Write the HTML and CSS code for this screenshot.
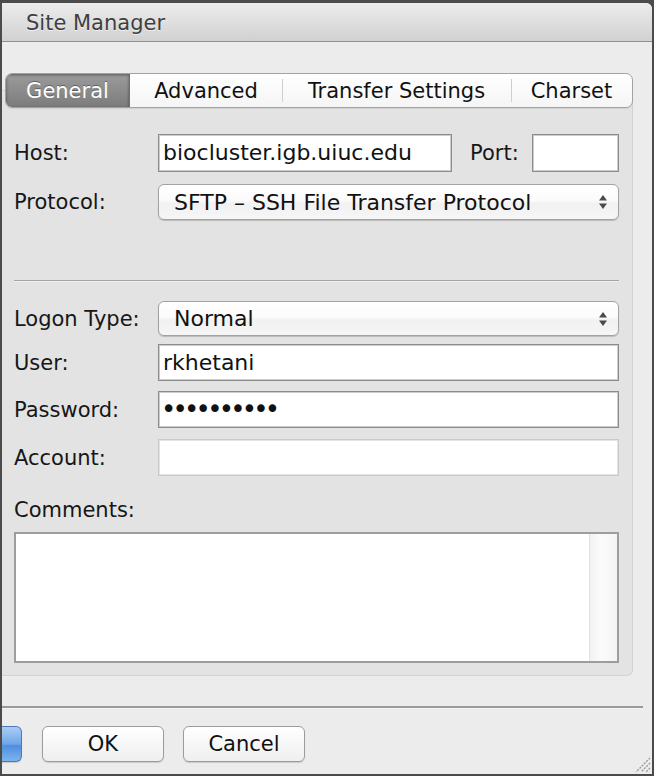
FILE: index.html
```html
<!DOCTYPE html>
<html>
<head>
<meta charset="utf-8">
<link rel="stylesheet" href="styles.css">
</head>
<body>
<div class="window">
  <div class="titlebar">Site Manager</div>
  <div class="content">
    <div class="tabs">
      <div class="tab tab-general selected">General</div>
      <div class="tab tab-advanced">Advanced</div>
      <div class="tab tab-transfer sep">Transfer Settings</div>
      <div class="tab tab-charset sep">Charset</div>
    </div>
    <div class="panel">
      <div class="row row-host">
        <div class="label">Host:</div>
        <div class="field host-field">
          <div class="input host-input">biocluster.igb.uiuc.edu</div>
          <div class="label port-label">Port:</div>
          <div class="input port-input"></div>
        </div>
      </div>
      <div class="row row-protocol">
        <div class="label">Protocol:</div>
        <div class="field">
          <div class="select">
            <span>SFTP – SSH File Transfer Protocol</span>
            <svg class="arrows" width="10" height="16" viewBox="0 0 10 16"><path d="M5 1 L9 6.5 L1 6.5 Z M1 9.5 L9 9.5 L5 15 Z" fill="#4a4a4a"/></svg>
          </div>
        </div>
      </div>
      <div class="divider"></div>
      <div class="row row-logon">
        <div class="label">Logon Type:</div>
        <div class="field">
          <div class="select select-logon">
            <span>Normal</span>
            <svg class="arrows" width="10" height="16" viewBox="0 0 10 16"><path d="M5 1 L9 6.5 L1 6.5 Z M1 9.5 L9 9.5 L5 15 Z" fill="#4a4a4a"/></svg>
          </div>
        </div>
      </div>
      <div class="row row-user">
        <div class="label">User:</div>
        <div class="field"><div class="input">rkhetani</div></div>
      </div>
      <div class="row row-pass">
        <div class="label">Password:</div>
        <div class="field"><div class="input password">••••••••••</div></div>
      </div>
      <div class="row row-account">
        <div class="label">Account:</div>
        <div class="field"><div class="input disabled"></div></div>
      </div>
      <div class="comments-label">Comments:</div>
      <div class="textarea">
        <div class="text-body"></div>
        <div class="scrolltrack"></div>
      </div>
    </div>
    <div class="footer-line"></div>
    <div class="buttons">
      <div class="btn btn-default"></div>
      <div class="btn">OK</div>
      <div class="btn">Cancel</div>
    </div>
  </div>
  <svg class="grip" width="20" height="20" viewBox="0 0 20 20">
    <path d="M19 5 L5 19 M19 10 L10 19 M19 15 L15 19" stroke="#9a9a9a" stroke-width="1.3" stroke-dasharray="2 1.2"/>
  </svg>
</div>
</body>
</html>
```

FILE: styles.css
```css
html, body {
  margin: 0;
  padding: 0;
}
body {
  width: 654px;
  height: 776px;
  overflow: hidden;
  background: #4b4b4b;
  font-family: "DejaVu Sans", "Liberation Sans", sans-serif;
  color: #1c1c1c;
}
.window {
  margin: 3px 2px 0 2px;
  height: 771px;
  background: #ececec;
  border-radius: 0 6px 0 0;
  position: relative;
  overflow: hidden;
  display: flex;
  flex-direction: column;
}
.titlebar {
  height: 38px;
  line-height: 40px;
  border-bottom: 1px solid #8f8f8f;
  background: linear-gradient(#ececec, #d1d1d1);
  font-size: 21px;
  color: #3f3f3f;
  padding-left: 24px;
  text-shadow: 0 1px 0 rgba(255,255,255,0.6);
}
.content {
  display: flex;
  flex-direction: column;
  padding-top: 31px;
}
.tabs {
  display: flex;
  margin-left: 3px;
  width: 628px;
  height: 35px;
  box-sizing: border-box;
  border: 1px solid #a3a3a3;
  border-radius: 7px;
  background: linear-gradient(#ffffff, #f5f5f5);
  position: relative;
  z-index: 1;
  overflow: hidden;
  box-shadow: 0 1px 1px rgba(0,0,0,0.08);
}
.tab {
  display: flex;
  align-items: center;
  justify-content: center;
  font-size: 21px;
  color: #111111;
  position: relative;
}
.tab.sep::before {
  content: "";
  position: absolute;
  left: 0;
  top: 5px;
  bottom: 5px;
  width: 1px;
  background: #cfcfcf;
}
.tab-general { width: 123px; }
.tab-advanced { width: 152px; }
.tab-transfer { width: 229px; }
.tab-charset { flex: 1; }
.tab.selected {
  background: linear-gradient(#9b9b9b, #7c7c7c);
  box-shadow: inset 0 1px 3px rgba(0,0,0,0.45);
  color: #ffffff;
  text-shadow: 0 -1px 0 rgba(0,0,0,0.35);
  border-right: 1px solid #6f6f6f;
}
.panel {
  margin-top: -18px;
  width: 631px;
  box-sizing: border-box;
  background: #e3e3e3;
  border: 1px solid #d2d2d2;
  border-left: none;
  border-radius: 0 6px 6px 0;
  padding: 43px 13px 12px 12px;
  display: flex;
  flex-direction: column;
}
.row {
  display: flex;
  align-items: center;
}
.label {
  width: 144px;
  flex: none;
  font-size: 21px;
  color: #161616;
}
.field {
  flex: 1;
  display: flex;
  align-items: center;
}
.input {
  box-sizing: border-box;
  height: 38px;
  flex: 1;
  background: #ffffff;
  border: 1px solid #8c8c8c;
  box-shadow: inset 0 0 0 1px #cdcdcd;
  font-size: 22px;
  line-height: 36px;
  padding-left: 4px;
  color: #111111;
  white-space: nowrap;
}
.row-host { height: 38px; }
.host-input { flex: none; width: 294px; }
.port-label { width: auto; margin-left: 18px; margin-right: 13px; }
.port-input { flex: none; width: 87px; }
.row-protocol { margin-top: 12px; }
.select {
  flex: 1;
  box-sizing: border-box;
  height: 36px;
  border: 1px solid #a2a2a2;
  border-radius: 6px;
  background: linear-gradient(#ffffff 0%, #fbfbfb 45%, #f1f1f1 55%, #f6f6f6 100%);
  box-shadow: 0 1px 1px rgba(0,0,0,0.18);
  display: flex;
  align-items: center;
  justify-content: space-between;
  padding: 0 10px 0 15px;
  font-size: 22px;
  color: #111111;
}
.select-logon { height: 35px; }
.arrows { flex: none; }
.divider {
  margin-top: 60px;
  height: 1px;
  background: #a3a3a3;
  border-bottom: 1px solid #efefef;
}
.row-logon { margin-top: 19px; }
.row-user { margin-top: 8px; }
.row-user .input, .row-pass .input, .row-account .input { height: 37px; line-height: 35px; }
.row-pass { margin-top: 10px; }
.row-account { margin-top: 11px; }
.input.password {
  font-size: 26px;
  letter-spacing: -3.8px;
  padding-left: 2px;
}
.input.disabled {
  border-color: #c9c9c9;
  box-shadow: inset 0 0 0 1px #e4e4e4;
}
.comments-label {
  margin-top: 21px;
  height: 26px;
  line-height: 26px;
  font-size: 21px;
  color: #161616;
}
.textarea {
  margin-top: 9px;
  height: 131px;
  box-sizing: border-box;
  border: 2px solid #9d9d9d;
  background: #ffffff;
  display: flex;
}
.text-body { flex: 1; }
.scrolltrack {
  width: 27px;
  border-left: 1px solid #e2e2e2;
  background: linear-gradient(90deg, #f2f2f2, #fbfbfb 40%, #f4f4f4);
}
.footer-line {
  margin-top: 30px;
  width: 641px;
  height: 2px;
  background: #9a9a9a;
  border-bottom: 1px solid #f4f4f4;
}
.buttons {
  margin-top: 17px;
  display: flex;
  gap: 19px;
}
.btn {
  box-sizing: border-box;
  width: 122px;
  height: 36px;
  border: 1px solid #9c9c9c;
  border-radius: 6px;
  background: linear-gradient(#ffffff, #f7f7f7 50%, #efefef);
  box-shadow: 0 1px 1px rgba(0,0,0,0.15);
  display: flex;
  align-items: center;
  justify-content: center;
  font-size: 21px;
  color: #111111;
}
.btn-default {
  width: 20px;
  margin-right: 1px;
  border: 1px solid #4e78b6;
  border-left: none;
  border-radius: 0 6px 6px 0;
  background: linear-gradient(#a9cdf4, #6fa6e8 50%, #4f8fdf 55%, #7db4ee);
}
.grip {
  position: absolute;
  right: 1px;
  bottom: 1px;
}
```
